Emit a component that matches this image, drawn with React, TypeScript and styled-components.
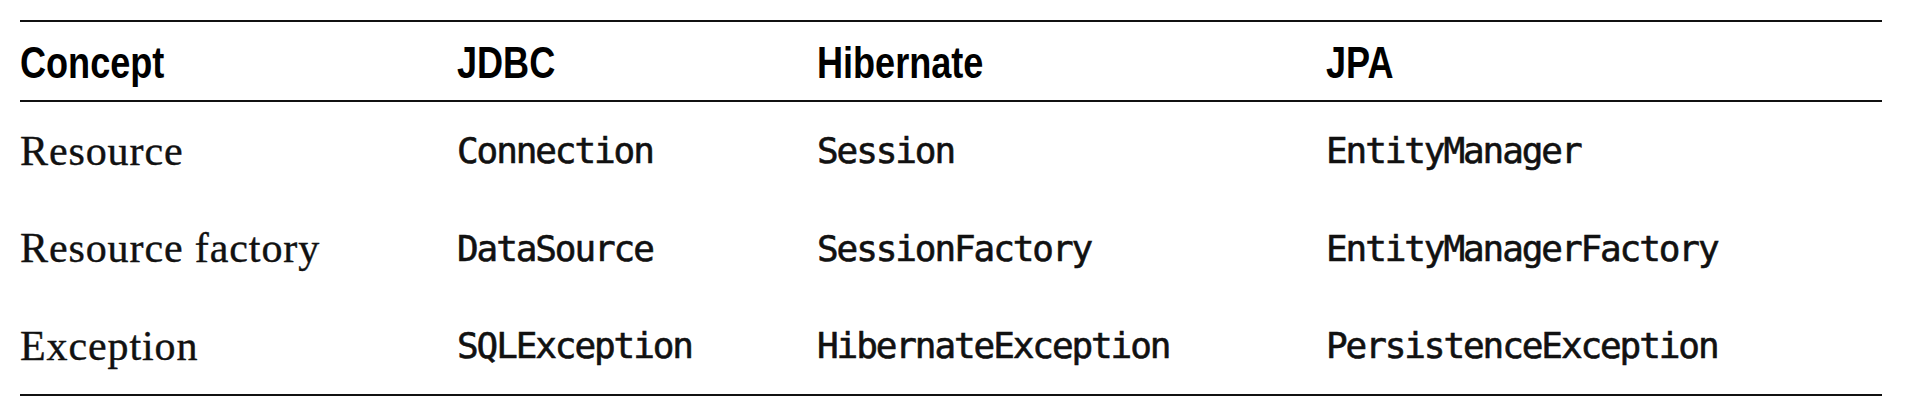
import React from 'react'
import styled, { createGlobalStyle } from 'styled-components'

const GlobalStyle = createGlobalStyle`
  html, body {
    margin: 0;
    padding: 0;
    background: #ffffff;
  }
`

const Page = styled.div`
  padding: 20px 38px 0 20px;
  width: 1862px;
`

const Table = styled.table`
  width: 100%;
  border-collapse: collapse;
  table-layout: fixed;
  border-top: 2px solid #111;
  border-bottom: 2px solid #111;
`

const HeadRow = styled.tr`
  height: 80px;
  border-bottom: 2px solid #111;
`

const BodyRow = styled.tr`
  height: 98px;
`

const Col = styled.col<{ w?: number }>`
  width: ${({ w }) => (w ? `${w}px` : 'auto')};
`

const HeadCell = styled.th`
  padding: 3px 0 0 0;
  text-align: left;
  vertical-align: middle;
  font-family: 'Liberation Sans', Arial, sans-serif;
  font-weight: 700;
  font-size: 44px;
  color: #000;
`

// the heading face in the picture is a condensed grotesque
const HeadLabel = styled.span`
  display: inline-block;
  transform: scaleX(0.82);
  transform-origin: left center;
  white-space: nowrap;
`

const ConceptCell = styled.td`
  padding: 0;
  vertical-align: middle;
  font-family: 'Liberation Serif', 'Times New Roman', serif;
  font-size: 42px;
  letter-spacing: 0.9px;
  color: #111;
  -webkit-text-stroke: 0.4px #111;
  white-space: nowrap;
`

const CodeCell = styled.td`
  padding: 0;
  vertical-align: middle;
  font-family: 'DejaVu Sans Mono', monospace;
  font-size: 36px;
  letter-spacing: -2.1px;
  color: #111;
  -webkit-text-stroke: 0.6px #111;
  white-space: nowrap;
`

const heads = ['Concept', 'JDBC', 'Hibernate', 'JPA']

const rows = [
  ['Resource', 'Connection', 'Session', 'EntityManager'],
  ['Resource factory', 'DataSource', 'SessionFactory', 'EntityManagerFactory'],
  ['Exception', 'SQLException', 'HibernateException', 'PersistenceException']
]

export default function App() {
  return (
    <>
      <GlobalStyle />
      <Page>
        <Table>
          <colgroup>
            <Col w={437} />
            <Col w={360} />
            <Col w={509} />
            <Col />
          </colgroup>
          <thead>
            <HeadRow>
              {heads.map(h => (
                <HeadCell key={h}>
                  <HeadLabel>{h}</HeadLabel>
                </HeadCell>
              ))}
            </HeadRow>
          </thead>
          <tbody>
            {rows.map(([concept, jdbc, hibernate, jpa]) => (
              <BodyRow key={concept}>
                <ConceptCell>{concept}</ConceptCell>
                <CodeCell>{jdbc}</CodeCell>
                <CodeCell>{hibernate}</CodeCell>
                <CodeCell>{jpa}</CodeCell>
              </BodyRow>
            ))}
          </tbody>
        </Table>
      </Page>
    </>
  )
}
